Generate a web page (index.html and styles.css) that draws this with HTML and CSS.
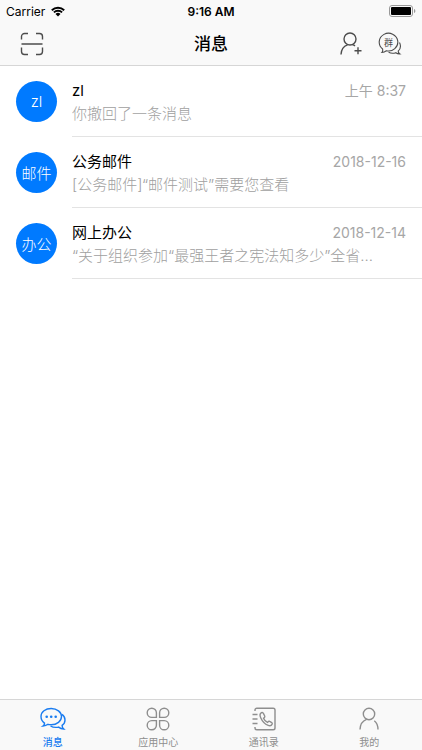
FILE: index.html
```html
<!DOCTYPE html>
<html lang="zh-CN">
<head>
<meta charset="utf-8">
<meta name="viewport" content="width=device-width, initial-scale=1">
<title>消息</title>
<link rel="stylesheet" href="styles.css">
</head>
<body>
<div class="app">
  <header class="top">
    <div class="status">
      <div class="status-left">
        <span>Carrier</span>
        <svg class="wifi" viewBox="0 0 14 11" aria-hidden="true">
          <path d="M.8 4.2a9 9 0 0 1 12.4 0M2.9 6.4a6 6 0 0 1 8.2 0" fill="none" stroke="#000" stroke-width="1.9"/>
          <path d="M4.5 8a3.6 3.6 0 0 1 5 0L7 10.600z"/>
        </svg>
      </div>
      <time class="clock">9:16 AM</time>
      <div class="status-right">
        <svg class="battery" viewBox="0 0 27 12" aria-hidden="true">
          <rect x=".5" y=".5" width="23" height="11" rx="2.500" fill="none" stroke="#999"/>
          <rect x="2" y="2" width="20" height="8" rx="1"/>
          <path d="M25 4c1.800.5 1.800 3.500 0 4z" fill="#999"/>
        </svg>
      </div>
    </div>
    <div class="nav">
      <div class="nav-left">
        <button class="icon-button" type="button" aria-label="扫一扫">
          <svg class="icon" viewBox="0 0 24 24"><path d="M1.500 7.500v-3a3 3 0 0 1 3-3H8M16 1.500h3.500a3 3 0 0 1 3 3v3M1.500 15.500v4a3 3 0 0 0 3 3H8M16 22.500h3.500a3 3 0 0 0 3-3v-4M1.500 12h21"/></svg>
        </button>
      </div>
      <h1 class="title">消息</h1>
      <div class="nav-right">
        <button class="icon-button" type="button" aria-label="添加联系人">
          <svg class="icon" viewBox="0 0 24 24"><circle cx="11" cy="7" r="6"/><path d="M2 22.500c.2-5 2.700-8.300 6.500-9.700M13.500 12.600c1 .3 1.800.7 2.500 1.300M15.500 18.700h7M19 15.200v7"/></svg>
        </button>
        <button class="icon-button" type="button" aria-label="群聊">
          <svg class="icon thin" viewBox="0 0 24 24"><path d="M4.600 17A9.300 8.900 0 1 1 8.400 18.800c-1.200.9-2.700 1.600-4.500 1.700.8-.9 1-2.100.7-3.500z"/><path d="M21.500 10.500c1.500 3 1.100 6.300-1.300 8.600 0 1.200.6 2.200 1.600 2.800-1.500.1-2.900-.4-4-1.200-2.400.8-5 .7-7.200-.4"/><text class="group-char" x="10.300" y="13.500" text-anchor="middle">群</text></svg>
        </button>
      </div>
    </div>
  </header>

  <main class="list">
    <a class="row" href="#zl">
      <span class="avatar">zl</span>
      <span class="body">
        <span class="line"><span class="name">zl</span><time class="date">上午 8:37</time></span>
        <span class="preview">你撤回了一条消息</span>
      </span>
    </a>
    <a class="row" href="#mail">
      <span class="avatar">邮件</span>
      <span class="body">
        <span class="line"><span class="name">公务邮件</span><time class="date">2018-12-16</time></span>
        <span class="preview">[公务邮件]“邮件测试”需要您查看</span>
      </span>
    </a>
    <a class="row" href="#office">
      <span class="avatar">办公</span>
      <span class="body">
        <span class="line"><span class="name">网上办公</span><time class="date">2018-12-14</time></span>
        <span class="preview">“关于组织参加“最强王者之宪法知多少”全省...</span>
      </span>
    </a>
  </main>

  <nav class="tabs">
    <a class="tab active" href="#messages" aria-current="page">
      <svg class="tab-icon" viewBox="0 0 26 24"><path d="M4.500 16.200C2.300 14.700 1 12.500 1 9.600 1 5 5.500 1.500 11.200 1.500s10.300 3.600 10.300 8.100-4.600 8.100-10.300 8.100c-1.100 0-2.200-.1-3.200-.4-1.300 1-3 1.600-5 1.700 1-.7 1.500-1.500 1.500-2.800z"/><path d="M22 7.300c1.900 1.300 3 3.300 3 5.600 0 2.300-1.100 4.200-2.900 5.500 0 1.500.6 2.700 1.700 3.600-2 0-3.800-.7-5.200-1.900-2.900.6-5.900.2-8.100-1.100"/><g class="dots"><circle cx="6.700" cy="9.700" r="1.300"/><circle cx="11.200" cy="9.700" r="1.300"/><circle cx="15.700" cy="9.700" r="1.300"/></g></svg>
      <span>消息</span>
    </a>
    <a class="tab" href="#apps">
      <svg class="tab-icon" viewBox="0 0 26 24"><path d="M11.400 10.400H6.800a4.600 4.600 0 1 1 4.600-4.600zM14.600 10.400h4.600a4.600 4.600 0 1 0-4.600-4.600zM11.400 13.600H6.800a4.600 4.600 0 1 0 4.600 4.600zM14.600 13.600h4.600a4.600 4.600 0 1 1-4.600 4.600z"/></svg>
      <span>应用中心</span>
    </a>
    <a class="tab" href="#contacts">
      <svg class="tab-icon" viewBox="0 0 26 24"><path d="M4 4V3a1.800 1.800 0 0 1 1.800-1.800h16.400A1.800 1.800 0 0 1 24 3v18a1.800 1.800 0 0 1-1.800 1.800H5.800A1.800 1.800 0 0 1 4 21v-1M1.500 7.500h5M1.500 12h5M1.500 16.500h5"/><path d="M10.500 5.700c-1.500.8-1.800 2.800-.8 5 1.500 3.400 4.300 6.400 7.500 7.700 1.800.7 3.300.2 4-1.400.2-.6 0-1.100-.5-1.400l-2-1.200c-.6-.4-1.200-.2-1.600.3l-.6.700c-1.900-.9-3.200-2.300-4-4.200l.8-.6c.5-.4.700-1 .4-1.600l-1.300-2.600c-.4-.8-1.100-1.100-1.900-.7z"/></svg>
      <span>通讯录</span>
    </a>
    <a class="tab" href="#me">
      <svg class="tab-icon" viewBox="0 0 26 24"><circle cx="13" cy="7" r="5.700"/><path d="M4 22.500c.2-5.200 2.600-8.700 6.500-10.200M18.300 13.800c2.300 1.700 3.600 4.700 3.700 8.700"/></svg>
      <span>我的</span>
    </a>
  </nav>
</div>
</body>
</html>
```

FILE: styles.css
```css
* {
  box-sizing: border-box;
}

body {
  margin: 0;
  background: #fff;
  color: #000;
  font-family: Inter, "Noto Sans CJK SC", sans-serif;
}

a {
  color: inherit;
  text-decoration: none;
}

.app {
  display: flex;
  flex-direction: column;
  min-height: 100vh;
}

.top {
  background: #f9f9f9;
  border-bottom: 1px solid #d6d6d6;
}

.status {
  display: grid;
  grid-template-columns: 1fr auto 1fr;
  align-items: center;
  height: 22px;
  padding: 0 6px;
  font-size: 12px;
}

.status-left {
  display: flex;
  align-items: center;
  gap: 6px;
}

.wifi {
  width: 14px;
  height: 11px;
}

.clock {
  font-weight: 600;
}

.status-right {
  display: flex;
  justify-content: flex-end;
}

.battery {
  width: 27px;
  height: 12px;
}

.nav {
  display: grid;
  grid-template-columns: 1fr auto 1fr;
  align-items: center;
  height: 43px;
  padding: 0 20px;
}

.nav-left,
.nav-right {
  display: flex;
  gap: 15px;
}

.nav-right {
  justify-content: flex-end;
}

.title {
  margin: 0;
  font-size: 17px;
  font-weight: 500;
  line-height: 24px;
}

.icon-button {
  padding: 0;
  border: 0;
  background: none;
  color: #4c4c4c;
}

.icon {
  display: block;
  width: 24px;
  height: 24px;
  fill: none;
  stroke: currentColor;
  stroke-width: 1.4;
}

.thin {
  stroke-width: 1.1;
}

.group-char {
  fill: currentColor;
  stroke: none;
  font-size: 9px;
}

.list {
  flex: 1;
}

.row {
  display: flex;
  align-items: stretch;
  gap: 15px;
  padding-left: 16px;
}

.avatar {
  display: flex;
  flex: none;
  align-items: center;
  justify-content: center;
  align-self: center;
  width: 41px;
  height: 41px;
  border-radius: 50%;
  background: #007aff;
  color: #fff;
  font-size: 15px;
  font-weight: 300;
}

.body {
  flex: 1;
  min-width: 0;
  padding: 13px 16px 11px 0;
  border-bottom: 1px solid #e3e3e3;
}

.line {
  display: flex;
  justify-content: space-between;
  line-height: 23px;
}

.name {
  font-size: 15px;
}

.date {
  color: #a6a6a6;
  font-size: 14px;
}

.preview {
  display: block;
  overflow: hidden;
  color: #a0a0a0;
  font-size: 15px;
  font-weight: 300;
  line-height: 23px;
  text-overflow: ellipsis;
  white-space: nowrap;
}

.tabs {
  display: grid;
  grid-template-columns: repeat(4, 1fr);
  background: #f9f9f9;
  border-top: 1px solid #d6d6d6;
}

.tab {
  display: flex;
  flex-direction: column;
  align-items: center;
  gap: 4px;
  padding: 7px 0 0;
  color: #8e8e8e;
  font-size: 10px;
  line-height: 15px;
}

.active {
  color: #1a7cf0;
  font-weight: 500;
}

.tab-icon {
  width: 26px;
  height: 24px;
  fill: none;
  stroke: currentColor;
  stroke-width: 1.4;
}

.dots {
  fill: currentColor;
  stroke: none;
}
```
